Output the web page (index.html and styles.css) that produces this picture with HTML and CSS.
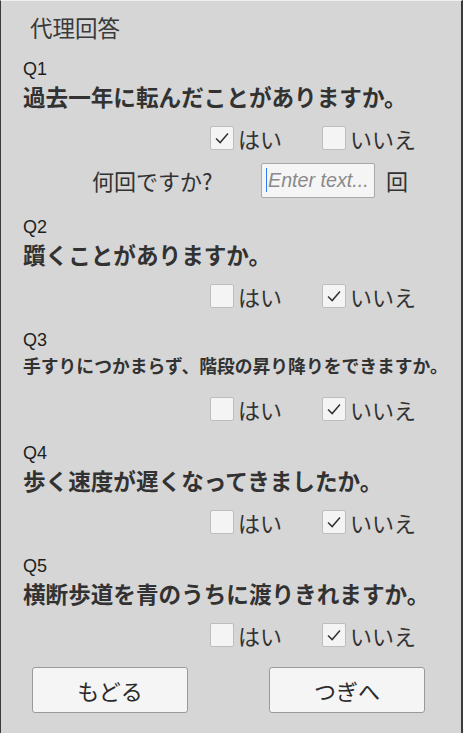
FILE: index.html
```html
<!DOCTYPE html>
<html lang="ja">
<head>
<meta charset="utf-8">
<link rel="stylesheet" href="styles.css">
</head>
<body>
<div class="panel">
  <h1 class="title">代理回答</h1>

  <section class="q">
    <div class="qno">Q1</div>
    <div class="qtext">過去一年に転んだことがありますか。</div>
    <div class="choices">
      <div class="opt"><span class="box"><svg viewBox="0 0 24 24"><path d="M5.5 12.5l4.5 4.5 8.5-10"/></svg></span><span class="lbl">はい</span></div>
      <div class="opt"><span class="box"></span><span class="lbl">いいえ</span></div>
    </div>
    <div class="count">
      <span class="count-lbl">何回ですか?</span>
      <span class="input"><span class="caret"></span><span class="ph">Enter text...</span></span>
      <span class="unit">回</span>
    </div>
  </section>

  <section class="q">
    <div class="qno">Q2</div>
    <div class="qtext">躓くことがありますか。</div>
    <div class="choices">
      <div class="opt"><span class="box"></span><span class="lbl">はい</span></div>
      <div class="opt"><span class="box"><svg viewBox="0 0 24 24"><path d="M5.5 12.5l4.5 4.5 8.5-10"/></svg></span><span class="lbl">いいえ</span></div>
    </div>
  </section>

  <section class="q">
    <div class="qno">Q3</div>
    <div class="qtext small">手すりにつかまらず、階段の昇り降りをできますか。</div>
    <div class="choices">
      <div class="opt"><span class="box"></span><span class="lbl">はい</span></div>
      <div class="opt"><span class="box"><svg viewBox="0 0 24 24"><path d="M5.5 12.5l4.5 4.5 8.5-10"/></svg></span><span class="lbl">いいえ</span></div>
    </div>
  </section>

  <section class="q">
    <div class="qno">Q4</div>
    <div class="qtext">歩く速度が遅くなってきましたか。</div>
    <div class="choices">
      <div class="opt"><span class="box"></span><span class="lbl">はい</span></div>
      <div class="opt"><span class="box"><svg viewBox="0 0 24 24"><path d="M5.5 12.5l4.5 4.5 8.5-10"/></svg></span><span class="lbl">いいえ</span></div>
    </div>
  </section>

  <section class="q">
    <div class="qno">Q5</div>
    <div class="qtext">横断歩道を青のうちに渡りきれますか。</div>
    <div class="choices">
      <div class="opt"><span class="box"></span><span class="lbl">はい</span></div>
      <div class="opt"><span class="box"><svg viewBox="0 0 24 24"><path d="M5.5 12.5l4.5 4.5 8.5-10"/></svg></span><span class="lbl">いいえ</span></div>
    </div>
  </section>

  <div class="nav">
    <div class="btn">もどる</div>
    <div class="btn">つぎへ</div>
  </div>
</div>
</body>
</html>
```

FILE: styles.css
```css
html, body {
  margin: 0;
  padding: 0;
  background: #d6d6d6;
}
body {
  font-family: "Noto Sans CJK JP", "Noto Sans", sans-serif;
  color: #323232;
}
.panel {
  box-sizing: border-box;
  width: 463px;
  height: 733px;
  background: #d6d6d6;
  border-left: 1px solid #3a3a3a;
  border-right: 2px solid #3a3a3a;
  border-top: 1px solid #efefef;
  padding: 0 0 0 22px;
}
.title {
  margin: 0;
  padding: 13px 0 0 7px;
  font-size: 22.5px;
  line-height: 26px;
  font-weight: 400;
  color: #3a3a3a;
}
.q {
  display: flex;
  flex-direction: column;
}
.qno {
  font-family: "Liberation Sans", Arial, sans-serif;
  font-size: 18px;
  line-height: 22px;
  color: #1e1e1e;
  margin-top: 20px;
}
.q:first-of-type .qno {
  margin-top: 18px;
}
.qtext {
  font-size: 22.6px;
  line-height: 30px;
  font-weight: 700;
  color: #323232;
  margin-top: 2px;
  white-space: nowrap;
}
.qtext.small {
  font-size: 17.8px;
  margin-top: -1px;
  margin-bottom: 3px;
}
.choices {
  display: grid;
  grid-template-columns: 112px auto;
  margin-left: 187px;
  margin-top: 13px;
  height: 26px;
}
.opt {
  display: flex;
  align-items: center;
  gap: 4px;
}
.box {
  box-sizing: border-box;
  width: 24px;
  height: 24px;
  background: #f4f4f4;
  border: 1px solid #bdbdbd;
  border-radius: 2px;
  display: flex;
  align-items: center;
  justify-content: center;
}
.box svg {
  width: 22px;
  height: 22px;
  fill: none;
  stroke: #323232;
  stroke-width: 1.6;
}
.lbl {
  font-size: 22px;
  line-height: 26px;
  color: #323232;
}
.count {
  display: flex;
  align-items: center;
  margin-left: 69px;
  margin-top: 11px;
  margin-bottom: -2px;
  height: 36px;
}
.count-lbl {
  width: 169px;
  font-size: 22px;
  color: #323232;
}
.input {
  box-sizing: border-box;
  width: 114px;
  height: 35px;
  background: #f5f5f5;
  border: 1px solid #a8a8a8;
  border-radius: 2px;
  display: flex;
  align-items: center;
  padding-left: 4px;
}
.caret {
  width: 1px;
  height: 24px;
  background: #2f7df6;
  margin-right: 1px;
}
.ph {
  font-family: "Liberation Sans", Arial, sans-serif;
  font-style: italic;
  font-size: 19.7px;
  color: #8a8a8a;
  white-space: nowrap;
  overflow: hidden;
}
.unit {
  margin-left: 11px;
  font-size: 22px;
}
.nav {
  display: flex;
  gap: 81px;
  margin: 19px 0 0 9px;
}
.btn {
  box-sizing: border-box;
  width: 156px;
  height: 46px;
  background: #f5f5f5;
  border: 1px solid #9a9a9a;
  border-radius: 3px;
  display: flex;
  align-items: center;
  justify-content: center;
  font-size: 22px;
  color: #2b2b2b;
}
```
